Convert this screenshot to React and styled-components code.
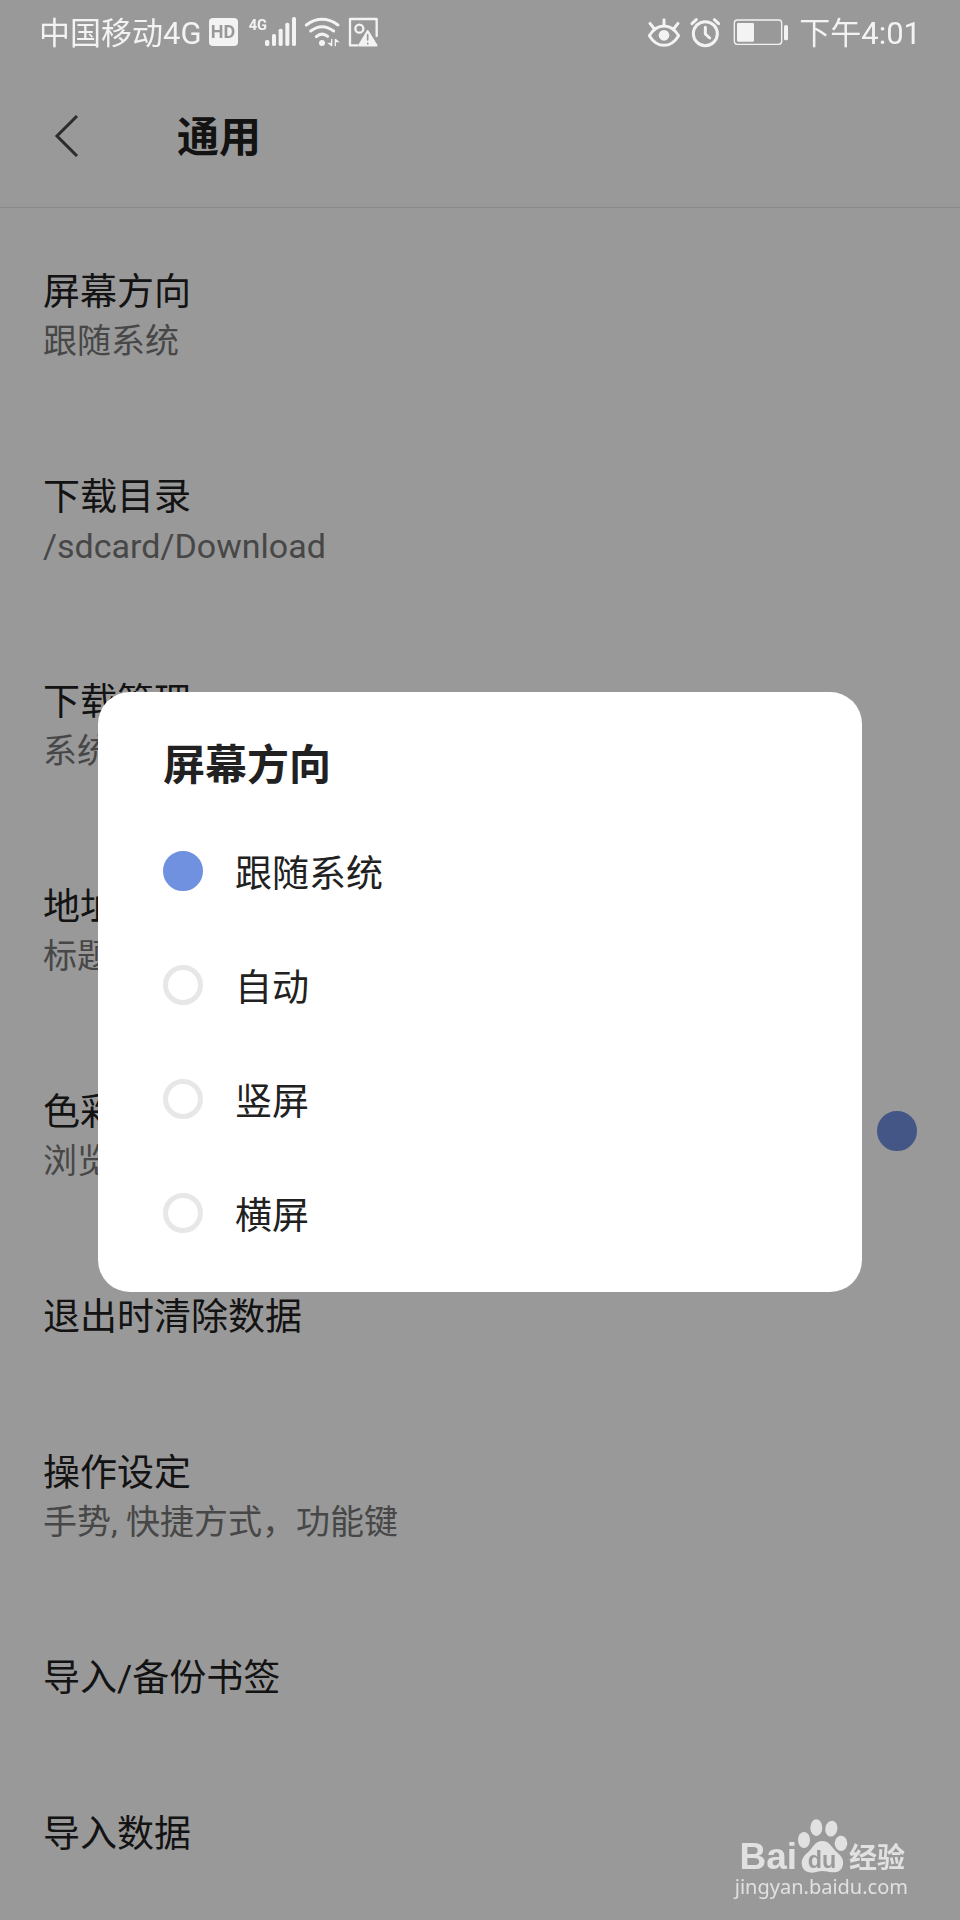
import React, { useState } from 'react'
import styled, { createGlobalStyle } from 'styled-components'

const GlobalStyle = createGlobalStyle`
  * {
    box-sizing: border-box;
  }
  body {
    margin: 0;
    background: #ffffff;
    color: #212121;
    font-family: Roboto, "Noto Sans CJK SC", sans-serif;
  }
  button, input {
    margin: 0;
    font-family: inherit;
  }
`
const Page = styled.div`
  position: relative;
  min-height: 100vh;
`
const StatusBar = styled.div`
  position: relative;
  z-index: 2;
  height: 64px;
  padding: 0 39px;
  display: flex;
  align-items: center;
  justify-content: space-between;
  color: #f3f3f3;
`
const StatusGroup = styled.div`
  display: flex;
  align-items: center;
  gap: ${(props) => props.gap}px;
  white-space: nowrap;
`
const StatusText = styled.span`
  padding-top: 3px;
  font-size: 31px;
  line-height: 40px;
`
const StatusIcon = styled.svg`
  width: ${(props) => props.$width}px;
  height: 32px;
  flex: none;
  overflow: visible;
  fill: none;
  stroke: currentColor;
  stroke-linecap: round;
  stroke-linejoin: round;
`
const HdBadge = styled.span`
  width: 29px;
  height: 28px;
  border-radius: 4px;
  background: #f3f3f3;
  color: #999999;
  font-size: 18px;
  font-weight: bold;
  line-height: 28px;
  text-align: center;
`
const Header = styled.header`
  height: 144px;
  padding-left: 44px;
  display: flex;
  align-items: center;
  border-bottom: 1px solid #e4e4e4;
`
const BackButton = styled.button`
  width: 133px;
  height: 64px;
  padding: 0 0 0 10px;
  display: flex;
  align-items: center;
  border: none;
  background: none;
  cursor: pointer;
`
const PageTitle = styled.h1`
  margin: 0;
  padding-top: 4px;
  font-size: 42px;
  line-height: 60px;
`
const List = styled.ul`
  margin: 0;
  padding: 7px 0 0;
  list-style: none;
`
const Row = styled.button`
  width: 100%;
  padding: 53px 43px 54px;
  display: flex;
  align-items: center;
  justify-content: space-between;
  border: none;
  background: none;
  color: inherit;
  text-align: left;
  cursor: pointer;
`
const RowText = styled.span`
  display: flex;
  flex-direction: column;
  line-height: 49px;
`
const RowTitle = styled.span`
  font-size: 37px;
`
const RowNote = styled.span`
  font-size: 34px;
  color: #777777;
`
const Toggle = styled.input`
  appearance: none;
  width: 40px;
  height: 40px;
  flex: none;
  border: 5px solid #e7e7e7;
  border-radius: 50%;
  cursor: pointer;
  &:checked {
    border-color: #7090e0;
    background: #7090e0;
  }
`
const RowToggle = styled(Toggle)`
  margin-bottom: 12px;
`
const Overlay = styled.div`
  position: fixed;
  inset: 0;
  z-index: 1;
  padding: 64px 98px 0;
  display: flex;
  align-items: center;
  background: rgba(0, 0, 0, 0.4);
`
const Dialog = styled.div`
  width: 100%;
  padding: 44px 65px 22px;
  border-radius: 32px;
  background: #ffffff;
`
const DialogTitle = styled.h2`
  margin: 0 0 18px;
  font-size: 42px;
  line-height: 60px;
`
const Option = styled.label`
  height: 114px;
  display: flex;
  align-items: center;
  gap: 32px;
  font-size: 37px;
  cursor: pointer;
`
const Watermark = styled.div`
  position: absolute;
  right: 52px;
  bottom: 20px;
  z-index: 2;
  display: flex;
  flex-direction: column;
  align-items: flex-end;
  color: #e1e1e1;
`
const Brand = styled.div`
  padding-right: 3px;
  display: flex;
  align-items: flex-end;
  font-weight: bold;
`
const BrandLatin = styled.span`
  font-family: "Liberation Sans", sans-serif;
  font-size: 37px;
  line-height: 32px;
`
const BrandChinese = styled.span`
  font-size: 28px;
  line-height: 28px;
`
const Site = styled.span`
  font-family: "Noto Sans", sans-serif;
  font-size: 20px;
  line-height: 27px;
`

const settings = [
  { title: '屏幕方向', note: '跟随系统' },
  { title: '下载目录', note: '/sdcard/Download' },
  { title: '下载管理', note: '系统' },
  { title: '地址栏', note: '标题' },
  { title: '色彩', note: '浏览', toggle: true },
  { title: '退出时清除数据' },
  { title: '操作设定', note: '手势, 快捷方式，功能键' },
  { title: '导入/备份书签' },
  { title: '导入数据' },
]

const directions = ['跟随系统', '自动', '竖屏', '横屏']

const SignalIcon = () => (
  <StatusIcon $width={53} viewBox="675 48 159 96" aria-hidden="true">
    <g fill="currentColor" stroke="none">
      <text x="686" y="89" fontSize="44" fontWeight="bold" fontFamily="Roboto, sans-serif">4G</text>
      <rect x="735" y="120" width="13" height="18" rx="5" />
      <rect x="756" y="102" width="12" height="36" rx="5" />
      <rect x="776" y="86" width="12" height="52" rx="5" />
      <rect x="796" y="68" width="12" height="70" rx="5" />
      <rect x="816" y="51" width="12" height="87" rx="5" />
    </g>
  </StatusIcon>
)

const WifiIcon = () => (
  <StatusIcon $width={36} viewBox="855 48 108 96" strokeWidth="9" aria-hidden="true">
    <path d="M859 75 Q906 41 954 75" />
    <path d="M872 93 Q906 67 941 93" />
    <path d="M889 110 Q906 95 923 109" />
    <circle cx="906" cy="129" r="9" fill="currentColor" stroke="none" />
    <path d="M933 116 V138 L922 128 H933 Z M948 137 V117 L959 127 H948 Z" fill="currentColor" stroke="none" />
    <path d="M935 118 V137 M946 118 V137" strokeWidth="4" />
  </StatusIcon>
)

const PictureAlertIcon = () => (
  <StatusIcon $width={32} viewBox="984 48 96 96" strokeWidth="7" aria-hidden="true">
    <path d="M1012 136 H990 V57 H1070 V108" />
    <circle cx="1018" cy="86" r="12" />
    <path d="M1043 94 L1069 136 H1018 Z" fill="currentColor" />
    <path d="M1043 104 V120 M1043 130 V131" stroke="#999999" strokeWidth="5" />
  </StatusIcon>
)

const EyeIcon = () => (
  <StatusIcon $width={32} viewBox="84 48 96 96" strokeWidth="9" aria-hidden="true">
    <path d="M88 107 Q106 78 132 78 Q158 78 176 107 Q158 136 132 136 Q106 136 88 107 Z" />
    <circle cx="132" cy="106" r="16" fill="currentColor" stroke="none" />
    <path d="M132 59 V76 M90 70 L101 84 M174 70 L163 84" />
  </StatusIcon>
)

const AlarmIcon = () => (
  <StatusIcon $width={31} viewBox="210 48 93 96" strokeWidth="9" aria-hidden="true">
    <circle cx="256" cy="101" r="36" />
    <path d="M256 82 V102 L269 114" />
    <path d="M216 71 L229 59 M283 59 L296 71" />
  </StatusIcon>
)

const BatteryIcon = () => (
  <StatusIcon $width={58} viewBox="333 48 174 96" strokeWidth="4" aria-hidden="true">
    <rect x="343" y="60" width="142" height="73" rx="9" />
    <rect x="351" y="69" width="51" height="56" rx="4" fill="currentColor" stroke="none" />
    <rect x="492" y="75" width="12" height="46" rx="5" fill="currentColor" stroke="none" />
  </StatusIcon>
)

const Paw = () => (
  <svg width="52" height="54" viewBox="224 84 156 162" aria-hidden="true">
    <g fill="#e1e1e1">
      <ellipse cx="245" cy="147" rx="18" ry="24" />
      <ellipse cx="282" cy="110" rx="18" ry="25" />
      <ellipse cx="327" cy="113" rx="18" ry="24" transform="rotate(10 327 113)" />
      <ellipse cx="356" cy="157" rx="19" ry="23" />
      <path d="M300 150 C322 150 328 170 344 184 C360 198 364 208 362 221 C359 238 346 245 330 244 C318 243 310 240 300 240 C290 240 282 244 270 245 C252 245 240 236 238 219 C237 204 245 194 258 183 C272 170 278 150 300 150 Z" />
    </g>
    <text x="299" y="230" textAnchor="middle" fontSize="70" fontWeight="bold" fontFamily="Liberation Sans, sans-serif" fill="#999999">du</text>
  </svg>
)

const SettingRow = ({ item }) => {
  const [on, setOn] = useState(true)
  return (
    <li>
      <Row as={item.toggle ? 'label' : 'button'}>
        <RowText>
          <RowTitle>{item.title}</RowTitle>
          {item.note && <RowNote>{item.note}</RowNote>}
        </RowText>
        {item.toggle && (
          <RowToggle type="checkbox" checked={on} onChange={() => setOn(!on)} />
        )}
      </Row>
    </li>
  )
}

export default function App() {
  const [direction, setDirection] = useState('跟随系统')
  return (
    <Page>
      <GlobalStyle />
      <StatusBar>
        <StatusGroup gap={7}>
          <StatusText>中国移动4G</StatusText>
          <HdBadge>HD</HdBadge>
          <SignalIcon />
          <WifiIcon />
          <PictureAlertIcon />
        </StatusGroup>
        <StatusGroup gap={10}>
          <EyeIcon />
          <AlarmIcon />
          <BatteryIcon />
          <StatusText>下午4:01</StatusText>
        </StatusGroup>
      </StatusBar>
      <Header>
        <BackButton aria-label="返回">
          <svg width="26" height="44" viewBox="0 0 26 44" fill="none" stroke="#484848" strokeWidth="3">
            <path d="M23 2 L3 22 L23 42" />
          </svg>
        </BackButton>
        <PageTitle>通用</PageTitle>
      </Header>
      <List>
        {settings.map((item) => (
          <SettingRow key={item.title} item={item} />
        ))}
      </List>
      <Overlay>
        <Dialog role="dialog" aria-modal="true" aria-labelledby="direction-title">
          <DialogTitle id="direction-title">屏幕方向</DialogTitle>
          {directions.map((name) => (
            <Option key={name}>
              <Toggle
                type="radio"
                name="direction"
                checked={direction === name}
                onChange={() => setDirection(name)}
              />
              {name}
            </Option>
          ))}
        </Dialog>
      </Overlay>
      <Watermark>
        <Brand>
          <BrandLatin>Bai</BrandLatin>
          <Paw />
          <BrandChinese>经验</BrandChinese>
        </Brand>
        <Site>jingyan.baidu.com</Site>
      </Watermark>
    </Page>
  )
}
